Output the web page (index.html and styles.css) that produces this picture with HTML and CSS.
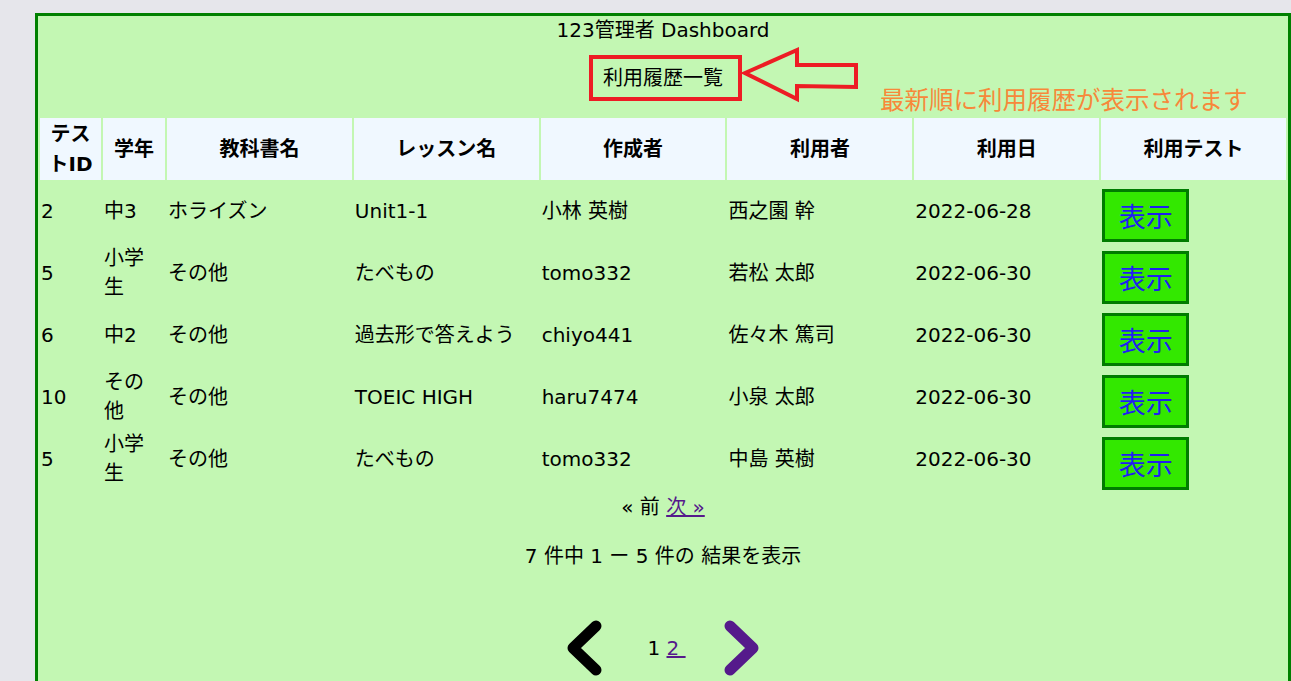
FILE: index.html
```html
<!DOCTYPE html>
<html lang="ja">
<head>
<meta charset="utf-8">
<title>123管理者 Dashboard</title>
<link rel="stylesheet" href="styles.css">
</head>
<body>
<div class="page">
  <div class="panel">
    <div class="title">123管理者 Dashboard</div>
    <p class="subtitle">利用履歴一覧</p>
    <table class="history">
      <thead>
        <tr>
          <th class="c-id">テストID</th>
          <th class="c-grade">学年</th>
          <th>教科書名</th>
          <th>レッスン名</th>
          <th>作成者</th>
          <th>利用者</th>
          <th>利用日</th>
          <th>利用テスト</th>
        </tr>
      </thead>
      <tbody>
        <tr>
          <td>2</td><td>中3</td><td>ホライズン</td><td>Unit1-1</td><td>小林 英樹</td><td>西之園 幹</td><td>2022-06-28</td>
          <td class="act"><button class="show">表示</button></td>
        </tr>
        <tr>
          <td>5</td><td>小学生</td><td>その他</td><td>たべもの</td><td>tomo332</td><td>若松 太郎</td><td>2022-06-30</td>
          <td class="act"><button class="show">表示</button></td>
        </tr>
        <tr>
          <td>6</td><td>中2</td><td>その他</td><td>過去形で答えよう</td><td>chiyo441</td><td>佐々木 篤司</td><td>2022-06-30</td>
          <td class="act"><button class="show">表示</button></td>
        </tr>
        <tr>
          <td>10</td><td>その他</td><td>その他</td><td>TOEIC HIGH</td><td>haru7474</td><td>小泉 太郎</td><td>2022-06-30</td>
          <td class="act"><button class="show">表示</button></td>
        </tr>
        <tr>
          <td>5</td><td>小学生</td><td>その他</td><td>たべもの</td><td>tomo332</td><td>中島 英樹</td><td>2022-06-30</td>
          <td class="act"><button class="show">表示</button></td>
        </tr>
      </tbody>
    </table>
    <div class="simple-pager">« 前 <a href="#">次&nbsp;»</a></div>
    <p class="summary">7 件中 1 ー 5 件の 結果を表示</p>
    <div class="pager">
      <svg class="chev chev-prev" width="36" height="60" viewBox="0 0 36 60"><polyline points="30,8 7,30 30,52" fill="none" stroke="#000" stroke-width="11" stroke-linecap="round" stroke-linejoin="round"/></svg>
      <span class="pages">1 <a href="#">2&nbsp;</a></span>
      <svg class="chev chev-next" width="36" height="60" viewBox="0 0 36 60"><polyline points="6,8 29,30 6,52" fill="none" stroke="#551a8b" stroke-width="11" stroke-linecap="round" stroke-linejoin="round"/></svg>
    </div>

    <div class="note-box"></div>
    <svg class="note-arrow" width="122" height="62" viewBox="0 0 122 62"><polygon points="5,29 57,6 57,21 116,21 116,43 57,42 57,55" fill="none" stroke="#ed1c24" stroke-width="4"/></svg>
    <div class="note-text">最新順に利用履歴が表示されます</div>
  </div>
</div>
</body>
</html>
```

FILE: styles.css
```css
html {
  overflow: hidden;
}
body {
  margin: 0;
  background: #e6e6eb;
  font-family: "DejaVu Sans", "Noto Sans CJK JP", sans-serif;
  color: #000;
}
.page {
  padding: 13px 0 0 35px;
}
.panel {
  position: relative;
  box-sizing: border-box;
  width: 1256px;
  border: 3px solid #008000;
  background: #c3f7b3;
  font-size: 20px;
  line-height: 30px;
  padding-bottom: 40px;
}
.title {
  text-align: center;
  line-height: 28px;
}
.subtitle {
  margin: 19px 0 23px;
  text-align: center;
}
.history {
  width: 100%;
  border-spacing: 2px;
  table-layout: fixed;
}
.history th {
  box-sizing: border-box;
  background: #f0f8ff;
  font-weight: bold;
  text-align: center;
  padding: 1px;
  line-height: 30px;
}
.history th.c-id {
  width: 61px;
}
.history th.c-grade {
  width: 62px;
}
.history tbody tr {
  height: 60px;
}
.history td {
  padding: 0 3px 2px 1px;
  line-height: 29px;
  text-align: left;
  vertical-align: middle;
}
.history td.act {
  vertical-align: top;
  padding: 7px 1px 0 1px;
}
.show {
  display: block;
  box-sizing: border-box;
  width: 87px;
  height: 53px;
  margin: 0;
  padding: 0;
  border: 3px solid #007c00;
  background: #33e800;
  color: #1f1ff0;
  font-family: "Noto Sans CJK JP", sans-serif;
  font-size: 27px;
  line-height: 1;
}
.simple-pager {
  text-align: center;
}
.simple-pager a,
.pages a {
  color: #551a8b;
  text-decoration: underline;
}
.summary {
  margin: 19px 0 20px;
  text-align: center;
}
.pager {
  display: flex;
  justify-content: center;
  align-items: center;
  padding-top: 27px;
}
.chev {
  display: block;
}
.chev-prev {
  margin-right: 45px;
}
.chev-next {
  margin-left: 38px;
}
.note-box {
  position: absolute;
  left: 551px;
  top: 39px;
  box-sizing: border-box;
  width: 153px;
  height: 46px;
  border: 4px solid #ed1c24;
}
.note-arrow {
  position: absolute;
  left: 702px;
  top: 28px;
}
.note-text {
  position: absolute;
  left: 842px;
  top: 71px;
  font-family: "Noto Sans CJK JP", sans-serif;
  font-size: 24.5px;
  line-height: 24.5px;
  color: #f7883a;
  white-space: nowrap;
}
```
